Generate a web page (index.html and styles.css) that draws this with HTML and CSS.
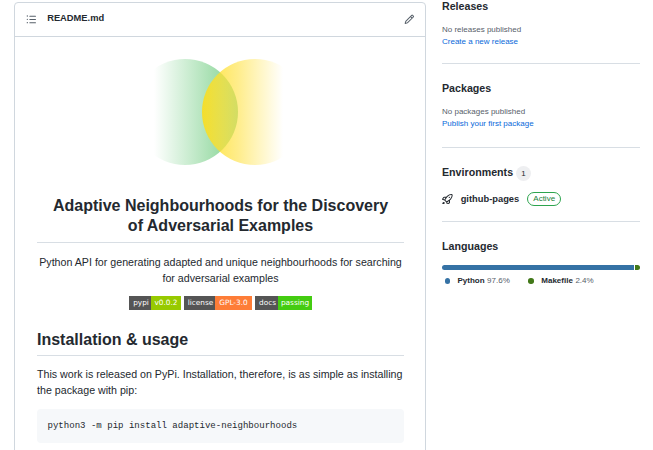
FILE: index.html
```html
<!DOCTYPE html>
<html lang="en">
<head>
<meta charset="utf-8">
<title>Adaptive Neighbourhoods</title>
<link rel="stylesheet" href="styles.css">
</head>
<body>
<div class="layout">
  <main class="readme">
    <header class="readme-header">
      <svg class="icon" viewBox="0 0 16 16"><path fill-rule="evenodd" d="M2 4a1 1 0 100-2 1 1 0 000 2zm3.75-1.5a.75.75 0 000 1.5h8.5a.75.75 0 000-1.5h-8.5zm0 5a.75.75 0 000 1.5h8.5a.75.75 0 000-1.5h-8.5zm0 5a.75.75 0 000 1.5h8.5a.75.75 0 000-1.5h-8.5zM3 8a1 1 0 11-2 0 1 1 0 012 0zm-1 6a1 1 0 100-2 1 1 0 000 2z"/></svg>
      <h2 class="file-name">README.md</h2>
      <svg class="icon" viewBox="0 0 16 16"><path fill-rule="evenodd" d="M11.013 1.427a1.75 1.75 0 012.474 0l1.086 1.086a1.75 1.75 0 010 2.474l-8.61 8.61c-.21.21-.47.364-.756.445l-3.251.93a.75.75 0 01-.927-.928l.929-3.25a1.75 1.75 0 01.445-.758l8.61-8.61zm1.414 1.06a.25.25 0 00-.354 0L10.811 3.75l1.439 1.44 1.263-1.263a.25.25 0 000-.354l-1.086-1.086zM11.189 6.25L9.75 4.81l-6.286 6.287a.25.25 0 00-.064.108l-.558 1.953 1.953-.558a.249.249 0 00.108-.064l6.286-6.286z"/></svg>
    </header>
    <article class="content">
      <svg class="logo" viewBox="0 0 130 108">
        <defs>
          <linearGradient id="green" gradientUnits="userSpaceOnUse" x1="0" x2="84" y1="0" y2="0"><stop offset="0" stop-color="#80d28f" stop-opacity="0"/><stop offset="1" stop-color="#80d28f"/></linearGradient>
          <linearGradient id="yellow" gradientUnits="userSpaceOnUse" x1="47" x2="129" y1="0" y2="0"><stop offset="0" stop-color="#ffdd0f" stop-opacity=".86"/><stop offset=".45" stop-color="#ffe34c" stop-opacity=".65"/><stop offset="1" stop-color="#ffe34c" stop-opacity="0"/></linearGradient>
        </defs>
        <circle cx="31" cy="54" r="53" fill="url(#green)"/>
        <circle cx="101" cy="54" r="53" fill="url(#yellow)"/>
      </svg>
      <h1 class="title">Adaptive Neighbourhoods for the Discovery<br>of Adversarial Examples</h1>
      <p class="lead">Python API for generating adapted and unique neighbourhoods for searching for adversarial examples</p>
      <div class="badges">
        <span class="badge pypi"><span class="key">pypi</span><span class="value">v0.0.2</span></span>
        <span class="badge license"><span class="key">license</span><span class="value">GPL-3.0</span></span>
        <span class="badge docs"><span class="key">docs</span><span class="value">passing</span></span>
      </div>
      <h2 class="section">Installation &amp; usage</h2>
      <p class="text">This work is released on PyPi. Installation, therefore, is as simple as installing the package with pip:</p>
      <pre class="code">python3 -m pip install adaptive-neighbourhoods</pre>
    </article>
  </main>
  <aside class="sidebar">
    <section class="block releases">
      <h3>Releases</h3>
      <p class="note">No releases published</p>
      <a class="link">Create a new release</a>
    </section>
    <section class="block packages">
      <h3>Packages</h3>
      <p class="note">No packages published</p>
      <a class="link">Publish your first package</a>
    </section>
    <section class="block environments">
      <h3>Environments <span class="counter">1</span></h3>
      <div class="env">
        <svg class="icon rocket" viewBox="0 0 16 16"><path fill-rule="evenodd" d="M14.064 0a8.75 8.75 0 00-6.187 2.563l-.459.458c-.314.314-.616.641-.904.979H3.31a1.75 1.75 0 00-1.49.833L.11 7.607a.75.75 0 00.418 1.11l3.102.954c.037.051.079.1.124.145l2.429 2.428c.046.046.094.088.145.125l.954 3.102a.75.75 0 001.11.418l2.774-1.707a1.75 1.75 0 00.833-1.49V9.485c.338-.288.665-.59.979-.904l.458-.459A8.75 8.75 0 0016 1.936V1.75A1.75 1.75 0 0014.25 0h-.186zM10.5 10.625c-.088.06-.177.118-.266.175l-2.35 1.521.548 1.783 1.949-1.2a.25.25 0 00.119-.213v-2.066zM3.678 8.116L5.2 5.766c.058-.09.117-.178.176-.266H3.309a.25.25 0 00-.213.119l-1.2 1.95 1.782.547zm5.26-4.493A7.25 7.25 0 0114.063 1.5h.186a.25.25 0 01.25.25v.186a7.25 7.25 0 01-2.123 5.127l-.459.458a15.21 15.21 0 01-2.499 2.02l-2.317 1.5-2.143-2.143 1.5-2.317a15.25 15.25 0 012.02-2.5l.458-.458zM12 5a1 1 0 11-2 0 1 1 0 012 0zm-8.44 9.56a1.5 1.5 0 10-2.12-2.12c-.734.73-1.047 2.332-1.15 3.003a.23.23 0 00.265.265c.671-.103 2.273-.416 3.005-1.148z"/></svg>
        <strong>github-pages</strong>
        <span class="state">Active</span>
      </div>
    </section>
    <section class="block languages">
      <h3>Languages</h3>
      <div class="bar"><span class="part python"></span><span class="part makefile"></span></div>
      <ul class="legend">
        <li><i class="dot python"></i><b>Python</b> <span>97.6%</span></li>
        <li><i class="dot makefile"></i><b>Makefile</b> <span>2.4%</span></li>
      </ul>
    </section>
  </aside>
</div>
</body>
</html>
```
FILE: styles.css
```css
* { box-sizing: border-box; }
html, body { height: 100%; }
body {
  margin: 0;
  overflow: hidden;
  background: #fff;
  color: #24292f;
  font-family: "Liberation Sans", Arial, sans-serif;
  font-size: 10.667px;
}
h1, h2, h3, p, pre, ul { margin: 0; padding: 0; }
.layout {
  display: grid;
  grid-template-columns: 412px 198px;
  column-gap: 16px;
  padding-left: 14px;
  height: 450px;
}
.readme {
  margin-top: 2px;
  height: 460px;
  border: 1px solid #d0d7de;
  border-radius: 4px;
}
.readme-header {
  display: flex;
  height: 34px;
  padding: 0 10.5px 0 11px;
  border-bottom: 1px solid #d0d7de;
}
.icon {
  flex: none;
  width: 10.667px;
  height: 10.667px;
  margin-top: 11px;
  fill: #57606a;
}
.file-name {
  flex: 1;
  padding-left: 10.5px;
  font-size: 9.333px;
  line-height: 14px;
  margin-top: 8px;
}
.content { padding: 21px 21px 0 22px; }
.logo {
  display: block;
  width: 130px;
  height: 108px;
  margin-left: 117px;
}
.title, .section {
  border-bottom: 1px solid #d8dee4;
  font-size: 16px;
  line-height: 20px;
}
.title {
  height: 47px;
  margin-top: 30px;
  text-align: center;
}
.lead, .text { line-height: 16px; }
.lead { margin-top: 11px; text-align: center; }
.badges {
  display: flex;
  justify-content: center;
  gap: 3px;
  margin-top: 10px;
}
.badge {
  display: flex;
  height: 14px;
  color: #fff;
  font: 7.333px/14px "DejaVu Sans", sans-serif;
  text-align: center;
  white-space: nowrap;
}
.key { background: #555; }
.key, .value { flex: none; }
.pypi .key { width: 22px; padding-left: 2px; }
.pypi .value { width: 30px; background: #97ca00; }
.license .key { width: 31px; padding-left: 2px; }
.license .value { width: 37px; background: #fe7d37; }
.docs .key { width: 23px; padding-left: 2px; }
.docs .value { width: 34px; background: #4c1; }
.section { height: 26px; margin-top: 20px; }
.text { margin-top: 10px; }
.code {
  height: 34px;
  margin-top: 11px;
  padding-left: 10.5px;
  border-radius: 4px;
  background: #f6f8fa;
  font: 9.067px/34px "Liberation Mono", monospace;
}
.block { border-bottom: 1px solid #d8dee4; }
.block h3 { font-size: 10.667px; line-height: 16px; }
.releases { height: 66px; }
.releases h3 { margin-top: -2px; }
.packages { height: 84px; padding-top: 16px; }
.note, .link {
  display: block;
  font-size: 8px;
  line-height: 12px;
}
.note { margin-top: 10px; color: #57606a; }
.link { color: #0969da; }
.environments { height: 74px; padding-top: 16px; }
.environments h3 { display: flex; }
.counter {
  width: 15px;
  height: 15px;
  margin: 2px 0 0 3px;
  border-radius: 8px;
  background: #eeeff1;
  font-size: 8px;
  font-weight: 400;
  line-height: 15px;
  text-align: center;
}
.env {
  display: flex;
  align-items: center;
  margin-top: 11px;
  height: 14px;
  font-size: 9.333px;
}
.rocket { margin: 0 8px 0 0; fill: #24292f; }
.state {
  width: 34px;
  height: 14px;
  margin-left: 8px;
  border: 1px solid #2da44e;
  border-radius: 7px;
  color: #1a7f37;
  font-size: 8px;
  line-height: 12px;
  text-align: center;
}
.languages { padding-top: 16px; border: 0; }
.bar {
  display: flex;
  gap: 1px;
  height: 5px;
  margin-top: 11px;
  overflow: hidden;
  border-radius: 4px;
}
.python { background: #3572a5; }
.makefile { background: #427819; }
.part.python { flex: 1; }
.part.makefile { width: 5px; }
.legend {
  display: flex;
  gap: 16px;
  margin-top: 5px;
  list-style: none;
  font-size: 8px;
  line-height: 12px;
}
.legend li { display: flex; align-items: center; gap: 2.5px; }
.legend span { color: #57606a; }
.dot { width: 5.5px; height: 5.5px; margin: 0 5px 0 2.5px; border-radius: 50%; }
```
